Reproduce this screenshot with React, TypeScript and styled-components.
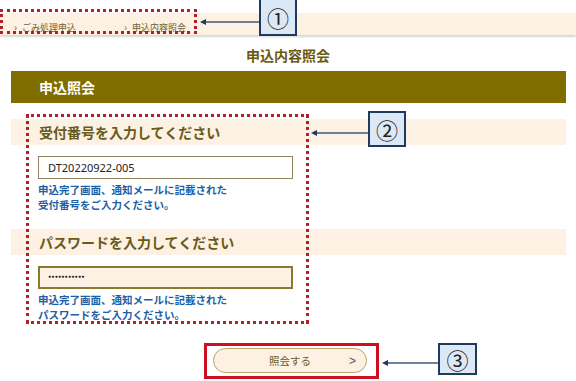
import React from "react";
import styled, { createGlobalStyle } from "styled-components";

const Global = createGlobalStyle`
  html, body { margin: 0; padding: 0; background: #ffffff; }
  body { font-family: "Noto Sans CJK JP", "Noto Sans", sans-serif; width: 576px; height: 381px; overflow: hidden; }
`;

const Page = styled.div`
  position: relative;
  width: 576px;
  height: 381px;
  padding-top: 13px;
  box-sizing: border-box;
`;

const Breadcrumb = styled.nav`
  display: flex;
  align-items: center;
  height: 22px;
  background: #fdf1e4;
  box-shadow: 0 2px 2px rgba(0, 0, 0, 0.16);
  padding-left: 14px;
  gap: 48px;
`;

const Crumb = styled.span`
  display: flex;
  align-items: baseline;
  gap: 5px;
  font-size: 9px;
  color: #6f6030;
  line-height: 1;
  padding-top: 2px;
  &::before {
    content: "›";
    font-size: 10px;
    padding-top: 3px;
  }
`;

const Title = styled.h1`
  margin: 10px 0 0;
  text-align: center;
  font-size: 14px;
  font-weight: 700;
  color: #6a5a10;
  line-height: 20px;
`;

const Panel = styled.section`
  margin: 6px 10px 0 11px;
`;

const PanelHead = styled.div`
  height: 32px;
  background: #806d00;
  color: #ffffff;
  font-size: 14px;
  font-weight: 700;
  display: flex;
  align-items: center;
  padding-left: 28px;
`;

const FieldHead = styled.div<{ $top: number }>`
  margin-top: ${(p) => p.$top}px;
  height: 26px;
  background: #fdf1e4;
  color: #6a5a18;
  font-size: 14px;
  font-weight: 700;
  display: flex;
  align-items: center;
  padding-left: 28px;
`;

const FieldBody = styled.div`
  padding: 11px 0 0 27px;
`;

const Input = styled.div<{ $filled?: boolean }>`
  width: 255px;
  height: 23px;
  box-sizing: border-box;
  border: ${(p) => (p.$filled ? "2px solid #8a7a30" : "1px solid #8f8560")};
  background: ${(p) => (p.$filled ? "#fdf1e4" : "#ffffff")};
  display: flex;
  align-items: center;
  padding-left: ${(p) => (p.$filled ? 8 : 9)}px;
  font-family: "Noto Sans", "Open Sans", sans-serif;
  font-size: 11px;
  color: #222222;
`;

const Dots = styled.span`
  font-size: 5px;
  letter-spacing: 0.3px;
  padding-bottom: 3px;
`;

const Help = styled.p`
  margin: 3px 0 0;
  font-size: 10.5px;
  line-height: 15px;
  font-weight: 700;
  color: #1d5fa6;
`;

const ButtonRow = styled.div`
  display: flex;
  justify-content: center;
  margin-top: 26px;
  padding-left: 3px;
`;

const Pill = styled.div`
  width: 154px;
  height: 25px;
  box-sizing: border-box;
  border: 1px solid #b5a56a;
  border-radius: 13px;
  background: #fdf1e4;
  display: grid;
  grid-template-columns: 1fr auto 1fr;
  align-items: center;
  padding: 0 10px;
  font-size: 10.5px;
  color: #6a5a28;
`;

const PillLabel = styled.span`
  grid-column: 2;
`;

const PillArrow = styled.span`
  grid-column: 3;
  justify-self: end;
  font-family: "Liberation Sans", sans-serif;
  font-size: 12px;
  color: #555555;
`;

const DottedBox = styled.div<{ $x: number; $y: number; $w: number; $h: number }>`
  position: absolute;
  left: ${(p) => p.$x}px;
  top: ${(p) => p.$y}px;
  width: ${(p) => p.$w}px;
  height: ${(p) => p.$h}px;
  box-sizing: border-box;
  border: 3px dotted #b0202a;
  pointer-events: none;
`;

const RedBox = styled.div`
  position: absolute;
  left: 204px;
  top: 343px;
  width: 175px;
  height: 36px;
  box-sizing: border-box;
  border: 3px solid #cc1020;
`;

const Callout = styled.div<{ $x: number; $y: number; $w: number; $h: number }>`
  position: absolute;
  left: ${(p) => p.$x}px;
  top: ${(p) => p.$y}px;
  width: ${(p) => p.$w}px;
  height: ${(p) => p.$h}px;
  box-sizing: border-box;
  border: 2px solid #1f3a5c;
  background: #dce8f5;
  display: flex;
  align-items: center;
  justify-content: center;
  font-family: "Noto Sans CJK JP", sans-serif;
  font-size: 22px;
  color: #222222;
  line-height: 1;
`;

const Leader = styled.svg<{ $x: number; $y: number; $w: number }>`
  position: absolute;
  left: ${(p) => p.$x}px;
  top: ${(p) => p.$y - 4}px;
  width: ${(p) => p.$w}px;
  height: 8px;
  overflow: visible;
`;

function LeaderLine({ x, y, w }: { x: number; y: number; w: number }) {
  return (
    <Leader $x={x} $y={y} $w={w} viewBox={`0 0 ${w} 8`}>
      <line x1={4} y1={4} x2={w} y2={4} stroke="#3d5a78" strokeWidth={1.3} />
      <polygon points="0,4 6,1 6,7" fill="#1f3a5c" />
    </Leader>
  );
}

export default function App() {
  return (
    <>
      <Global />
      <Page>
        <Breadcrumb>
          <Crumb>ごみ処理申込</Crumb>
          <Crumb>申込内容照会</Crumb>
        </Breadcrumb>
        <Title>申込内容照会</Title>
        <Panel>
          <PanelHead>申込照会</PanelHead>
          <FieldHead $top={16}>受付番号を入力してください</FieldHead>
          <FieldBody>
            <Input>DT20220922-005</Input>
            <Help>
              申込完了画面、通知メールに記載された
              <br />
              受付番号をご入力ください。
            </Help>
          </FieldBody>
          <FieldHead $top={17}>パスワードを入力してください</FieldHead>
          <FieldBody>
            <Input $filled>
              <Dots>●●●●●●●●●●●</Dots>
            </Input>
            <Help>
              申込完了画面、通知メールに記載された
              <br />
              パスワードをご入力ください。
            </Help>
          </FieldBody>
          <ButtonRow>
            <Pill>
              <PillLabel>照会する</PillLabel>
              <PillArrow>&gt;</PillArrow>
            </Pill>
          </ButtonRow>
        </Panel>

        <DottedBox $x={0} $y={9} $w={197} $h={25} />
        <DottedBox $x={26} $y={114} $w={283} $h={210} />
        <RedBox />

        <Callout $x={259} $y={-2} $w={38} $h={38}>①</Callout>
        <LeaderLine x={200} y={22} w={59} />
        <Callout $x={368} $y={111} $w={38} $h={36}>②</Callout>
        <LeaderLine x={311} y={133} w={57} />
        <Callout $x={438} $y={343} $w={39} $h={32}>③</Callout>
        <LeaderLine x={382} y={363} w={56} />
      </Page>
    </>
  );
}
